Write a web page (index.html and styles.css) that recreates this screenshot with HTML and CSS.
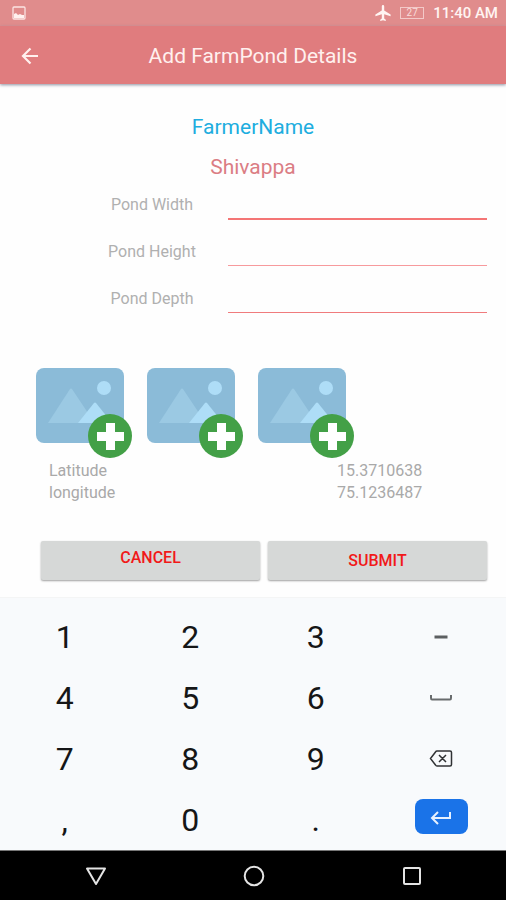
FILE: index.html
```html
<!DOCTYPE html>
<html lang="en">
<head>
<meta charset="utf-8">
<meta name="viewport" content="width=device-width, initial-scale=1">
<title>Add FarmPond Details</title>
<link rel="stylesheet" href="styles.css">
</head>
<body>
<svg class="defs" aria-hidden="true">
  <symbol id="photo-add" viewBox="0 0 96 90">
    <rect width="88" height="75" rx="8" fill="#8bbbd8"/>
    <path d="M12 55 34 21q1-1 2 0l16 24v10z" fill="#9bc9e3"/>
    <path d="M42 55 58 35q1-1 2 0l16 20z" fill="#aeddf7"/>
    <circle cx="68" cy="20" r="7" fill="#aeddf7"/>
    <circle cx="74" cy="68" r="22" fill="#43a047"/>
    <path d="M70 55h9v9h9v9h-9v9h-9v-9h-9v-9h9z" fill="#fff"/>
  </symbol>
</svg>

<div class="status-bar">
  <svg width="14" height="14" viewBox="0 0 14 14" aria-hidden="true">
    <rect x="1" y="1" width="12" height="12" rx="1" fill="none" stroke="#fbe3e2" stroke-width="1.300"/>
    <path d="M2 12V8l2-1 2 2 2-1 2 1 2 0v3z" fill="#fff1ef"/>
  </svg>
  <div class="status-right">
    <svg width="16" height="16" viewBox="2 2 19 20" aria-hidden="true">
      <path d="M21 16v-2l-8-5V3.500a1.500 1.500 0 0 0-3 0V9l-8 5v2l8-2.500V19l-2 1.500V22l3.500-1 3.500 1v-1.500L13 19v-5.500z" fill="#fff4f2"/>
    </svg>
    <span class="battery">27</span>
    <span class="clock">11:40 AM</span>
  </div>
</div>

<header class="app-bar">
  <button class="back" type="button" aria-label="Back">
    <svg width="18" height="18" viewBox="0 0 18 18" aria-hidden="true">
      <path d="M17 9H2M9.500 1.500 2 9l7.500 7.500" fill="none" stroke="#fff0ee" stroke-width="2.200"/>
    </svg>
  </button>
  <h1>Add FarmPond Details</h1>
</header>

<main>
  <h2 class="caption">FarmerName</h2>
  <p class="farmer">Shivappa</p>
  <form>
    <div class="field"><label for="width">Pond Width</label><input id="width" class="focused" type="text" inputmode="decimal"></div>
    <div class="field"><label for="height">Pond Height</label><input id="height" class="faint" type="text" inputmode="decimal"></div>
    <div class="field"><label for="depth">Pond Depth</label><input id="depth" type="text" inputmode="decimal"></div>
    <div class="photos">
      <button type="button" aria-label="Add photo 1"><svg><use href="#photo-add"/></svg></button>
      <button type="button" aria-label="Add photo 2"><svg><use href="#photo-add"/></svg></button>
      <button type="button" aria-label="Add photo 3"><svg><use href="#photo-add"/></svg></button>
    </div>
    <dl class="location">
      <dt>Latitude</dt><dd>15.3710638</dd>
      <dt>longitude</dt><dd>75.1236487</dd>
    </dl>
    <div class="actions">
      <button class="cancel" type="button">CANCEL</button>
      <button type="submit">SUBMIT</button>
    </div>
  </form>
</main>

<section class="keypad" aria-label="Number keypad">
  <button type="button">1</button><button type="button">2</button><button type="button">3</button>
  <button type="button" aria-label="Minus"><svg width="24" height="24" viewBox="0 0 24 24"><path d="M5.500 12h13" stroke="#5c5f61" stroke-width="3"/></svg></button>
  <button type="button">4</button><button type="button">5</button><button type="button">6</button>
  <button type="button" aria-label="Space"><svg width="24" height="24" viewBox="0 0 24 24"><path d="M2 9v3q0 1.500 1 1.500h18q1 0 1-1.500V9" fill="none" stroke="#686b6d" stroke-width="2"/></svg></button>
  <button type="button">7</button><button type="button">8</button><button type="button">9</button>
  <button type="button" aria-label="Delete"><svg width="24" height="24" viewBox="0 0 24 24"><path d="M8 4h13q1.500 0 1.500 1.500v12Q22.500 19 21 19H8q-1 0-1.500-1L1.500 11.500 6.500 5Q7 4 8 4zM10 8l7 7m0-7-7 7" fill="none" stroke="#303234" stroke-width="1.500"/></svg></button>
  <button type="button">,</button><button type="button">0</button><button type="button">.</button>
  <button type="button" aria-label="Enter"><span class="enter"><svg width="24" height="24" viewBox="0 0 24 24"><path d="M21 7v6H4M9 7l-6 6 6 6" fill="none" stroke="#e6f1ff" stroke-width="2"/></svg></span></button>
</section>

<nav class="nav-bar" aria-label="System navigation">
  <button type="button" aria-label="Back"><svg width="24" height="24" viewBox="0 0 24 24"><path d="M3 4.500h18L12 20z" fill="none" stroke="#e4e4e4" stroke-width="2" stroke-linejoin="round"/></svg></button>
  <button type="button" aria-label="Home"><svg width="24" height="24" viewBox="0 0 24 24"><circle cx="12" cy="12" r="9.300" fill="none" stroke="#e4e4e4" stroke-width="2"/></svg></button>
  <button type="button" aria-label="Recent apps"><svg width="24" height="24" viewBox="0 0 24 24"><rect x="4" y="4" width="16" height="16" rx="1" fill="none" stroke="#e4e4e4" stroke-width="2"/></svg></button>
</nav>
</body>
</html>
```
FILE: styles.css
```css
* {
  box-sizing: border-box;
}

body {
  margin: 0;
  min-height: 100vh;
  display: flex;
  flex-direction: column;
  background: #fefefe;
  font-family: Roboto, "Liberation Sans", sans-serif;
}

button {
  padding: 0;
  border: 0;
  background: none;
  font-family: inherit;
}

svg {
  display: block;
}

.defs {
  display: none;
}

.status-bar {
  display: flex;
  align-items: center;
  justify-content: space-between;
  height: 26px;
  padding: 0 8px 0 12px;
  background: #e08c8c;
  color: #fff4f2;
}

.status-right {
  display: flex;
  align-items: center;
  gap: 9px;
}

.battery {
  width: 24px;
  border: 1px solid #f3c9c8;
  font-size: 10px;
  line-height: 10px;
  text-align: center;
  color: #f9dddb;
}

.clock {
  font-size: 15px;
  font-weight: 500;
  line-height: 28px;
}

.app-bar {
  display: grid;
  grid-template-columns: 60px 1fr 60px;
  align-items: center;
  height: 58px;
  padding-top: 2px;
  background: #e07c7e;
  box-shadow: 0 1px 3px #8c90a0;
}

.back {
  display: grid;
  place-items: center;
  height: 48px;
}

h1 {
  margin: 0;
  text-align: center;
  font-size: 21px;
  font-weight: 400;
  line-height: 28px;
  color: #fff0ee;
}

main {
  flex: 1;
  padding: 29px 19px 16px;
}

.caption,
.farmer {
  margin: 0 0 12px;
  text-align: center;
  font-size: 21px;
  font-weight: 400;
  line-height: 28px;
  color: #20addf;
}

.farmer {
  margin: 0;
  color: #db7d84;
}

.field {
  display: grid;
  grid-template-columns: 152px 1fr;
  height: 47px;
  padding-left: 57px;
}

.field label {
  text-align: center;
  font-size: 16px;
  line-height: 48px;
  color: #b0b0b0;
}

.field input {
  min-width: 0;
  width: 100%;
  height: 38px;
  padding: 0 4px;
  border: 0;
  border-bottom: 1px solid #f07b7d;
  outline: 0;
  background: none;
  font: 16px Roboto, sans-serif;
}

.field input.focused {
  height: 39px;
  border-bottom: 2px solid #f47575;
}

.field input.faint {
  border-bottom-color: #f79a9d;
}

.photos {
  display: flex;
  gap: 15px;
  padding: 46px 0 0 17px;
}

.photos svg {
  width: 96px;
  height: 90px;
}

.location {
  display: grid;
  grid-template-columns: 288px 1fr;
  margin: 0;
  padding: 2px 0 0 30px;
  font-size: 16px;
  line-height: 22px;
  color: #a9a9a9;
}

.location dd {
  margin: 0;
}

.actions {
  display: grid;
  grid-template-columns: 1fr 1fr;
  gap: 8px;
  padding: 37px 0 0 22px;
}

.actions button {
  height: 39px;
  border-radius: 2px;
  background: #d6d8d7;
  box-shadow: 0 1px 2px #a0a0a0;
  font-size: 16px;
  font-weight: 500;
  line-height: 20px;
  color: #f11919;
}

.actions .cancel {
  padding-bottom: 6px;
}

.keypad {
  display: grid;
  grid-template-columns: repeat(4, 1fr);
  grid-auto-rows: 61px;
  padding: 8px 2px 0;
  border-top: 1px solid #f4f5f5;
  background: #f8fafc;
}

.keypad button {
  display: grid;
  place-items: center;
  font-size: 32px;
  line-height: 40px;
  color: #151617;
}

.enter {
  display: grid;
  place-items: center;
  width: 53px;
  height: 35px;
  margin-bottom: 6px;
  border-radius: 8px;
  background: #1a73e8;
}

.nav-bar {
  display: grid;
  grid-template-columns: repeat(3, 1fr);
  height: 50px;
  padding: 0 15px 0 17px;
  border-top: 1px solid #777;
  background: #000;
}

.nav-bar button {
  display: grid;
  place-items: center;
}
```
